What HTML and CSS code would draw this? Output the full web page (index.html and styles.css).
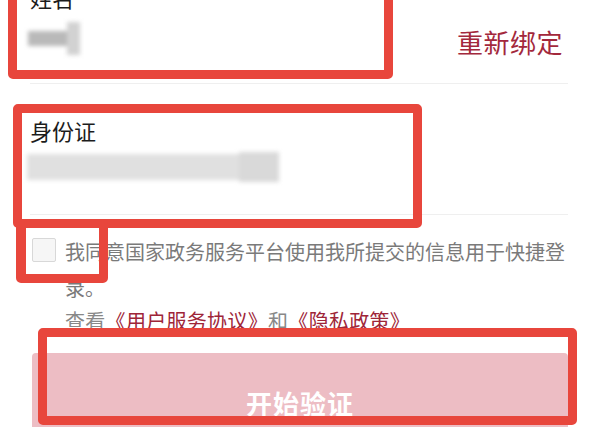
FILE: index.html
```html
<!DOCTYPE html>
<html lang="zh-CN">

<head>
    <meta charset="UTF-8">
    <meta name="viewport" content="width=device-width, initial-scale=1.0">
    <title>身份核验</title>
    <link rel="stylesheet" href="styles.css">
</head>

<body>
    <div class="screen">
        <div class="row row-name">
            <div class="field">
                <p class="label">姓名</p>
                <div class="name-blur">
                    <span class="blur-dark"></span>
                    <span class="blur-light"></span>
                </div>
            </div>
            <a class="rebind">重新绑定</a>
        </div>

        <div class="row row-id">
            <p class="label">身份证</p>
            <div class="id-blur">
                <span class="id-main"></span>
                <span class="id-tail"></span>
            </div>
        </div>

        <div class="agree">
            <span class="checkbox"></span>
            <div class="terms">
                <p>我同意国家政务服务平台使用我所提交的信息用于快捷登录。</p>
                <p class="links">查看<a>《用户服务协议》</a>和<a>《隐私政策》</a></p>
            </div>
        </div>

        <button class="start">开始验证</button>

        <!-- annotation frames -->
        <div class="mark mark-name"></div>
        <div class="mark mark-id"></div>
        <div class="mark mark-check"></div>
        <div class="mark mark-button"></div>
    </div>
</body>

</html>
```

FILE: styles.css
```css
body {
    margin: 0;
    background-color: #fff;
    font-family: 'Noto Sans CJK SC', 'Noto Sans', sans-serif;
}

.screen {
    position: relative;
    height: 427px;
    overflow: hidden;
    padding: 0 32px 0 30px;
    box-sizing: border-box;
}

.row {
    border-bottom: 1px solid #efefef;
    box-sizing: border-box;
}

.label {
    margin: 0;
    font-size: 22px;
    line-height: 22px;
    color: #1c1c1c;
}

.row-name {
    display: flex;
    align-items: center;
    height: 84px;
}

.row-name .field {
    flex: 1;
    align-self: stretch;
}

.row-name .label {
    margin-top: -14px;
}

.name-blur {
    display: flex;
    align-items: center;
    height: 33px;
    margin: 14px 0 0 -2px;
    filter: blur(2px);
}

.blur-dark {
    width: 39px;
    height: 15px;
    background: #b9b9b9;
}

.blur-light {
    width: 13px;
    height: 33px;
    background: #d2d2d2;
}

.rebind {
    margin-right: 5px;
    font-size: 26px;
    line-height: 1;
    letter-spacing: 0.5px;
    color: #a3283c;
}

.row-id {
    height: 131px;
    padding-top: 35px;
}

.id-blur {
    display: flex;
    align-items: center;
    height: 30px;
    margin: 11px 0 0 -3px;
    filter: blur(2px);
}

.id-main {
    width: 212px;
    height: 26px;
    background: #e0e0e0;
}

.id-tail {
    width: 40px;
    height: 30px;
    background: #d9d9d9;
}

.agree {
    display: flex;
    align-items: flex-start;
    padding-top: 19px;
}

.checkbox {
    flex: none;
    width: 24px;
    height: 24px;
    margin: 4px 0 0 2px;
    border: 1px solid #d8d8d8;
    border-radius: 2px;
    background: #f6f6f6;
    box-sizing: border-box;
}

.terms {
    flex: 1;
    margin-left: 9px;
}

.terms p {
    margin: 0;
    font-size: 20px;
    line-height: 36px;
    color: #7a7a7a;
}

.terms .links {
    margin-top: -3px;
    letter-spacing: 0.3px;
    color: #888;
}

.links a {
    color: #9e2538;
}

.start {
    display: block;
    width: calc(100% - 2px);
    height: 98px;
    margin: 14px 0 0 2px;
    border: none;
    border-radius: 4px;
    background-color: #edbdc4;
    font-family: inherit;
    font-size: 26px;
    font-weight: bold;
    letter-spacing: 1px;
    color: #fff;
}

.mark {
    position: absolute;
    border: 9px solid #e8463c;
    border-radius: 5px;
    box-sizing: border-box;
}

.mark-name {
    left: 8px;
    top: -20px;
    width: 385px;
    height: 99px;
}

.mark-id {
    left: 13px;
    top: 104px;
    width: 409px;
    height: 124px;
}

.mark-check {
    left: 16px;
    top: 219px;
    width: 92px;
    height: 64px;
    border-left-width: 10px;
}

.mark-button {
    left: 38px;
    top: 328px;
    width: 539px;
    height: 97px;
}
```
